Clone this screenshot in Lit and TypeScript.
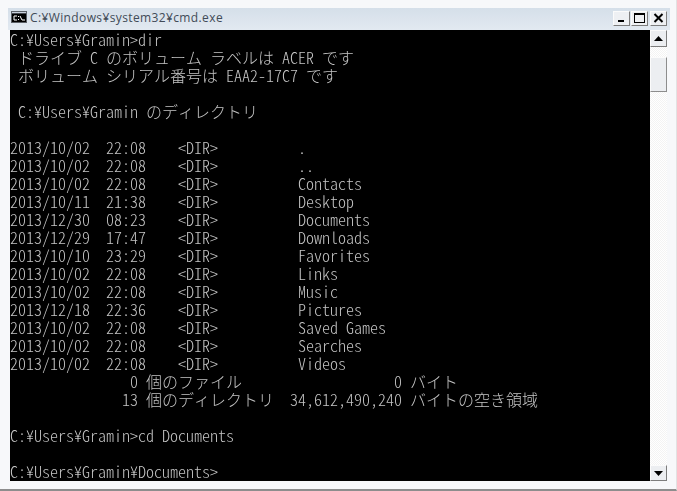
import { LitElement, html, css } from "lit";
import { customElement } from "lit/decorators.js";

const P = "C:¥Users¥Gramin";
const row = (d: string, t: string, n: string) => `${d}  ${t}    <DIR>          ${n}`;
const LINES = [
  `${P}>dir`,
  " ドライブ C のボリューム ラベルは ACER です",
  " ボリューム シリアル番号は EAA2-17C7 です",
  "",
  ` ${P} のディレクトリ`,
  "",
  row("2013/10/02", "22:08", "."),
  row("2013/10/02", "22:08", ".."),
  row("2013/10/02", "22:08", "Contacts"),
  row("2013/10/11", "21:38", "Desktop"),
  row("2013/12/30", "08:23", "Documents"),
  row("2013/12/29", "17:47", "Downloads"),
  row("2013/10/10", "23:29", "Favorites"),
  row("2013/10/02", "22:08", "Links"),
  row("2013/10/02", "22:08", "Music"),
  row("2013/12/18", "22:36", "Pictures"),
  row("2013/10/02", "22:08", "Saved Games"),
  row("2013/10/02", "22:08", "Searches"),
  row("2013/10/02", "22:08", "Videos"),
  "               0 個のファイル                   0 バイト",
  "              13 個のディレクトリ  34,612,490,240 バイトの空き領域",
  "",
  `${P}>cd Documents`,
  "",
  `${P}¥Documents>`,
];

@customElement("app-root")
export class AppRoot extends LitElement {
  static styles = css`
    :host { display: block; width: 677px; height: 491px; overflow: hidden; }
    .win {
      box-sizing: border-box; width: 677px; height: 491px; display: flex; flex-direction: column;
      background: #f7f8fa;
      padding-top: 8px;
      border-bottom: 2px solid #8d8d8d;
      border-right: 1px solid #e2e2e2;
    }
    .title {
      box-sizing: border-box; height: 22px; margin: 0 6px 0 8px; padding: 0 3px 4px 3px;
      display: flex; align-items: center; gap: 3px; flex: none;
      background: linear-gradient(#d5dfe9, #e2e9f1);
    }
    .icon { width: 16px; height: 12px; flex: none; display: block; }
    .caption {
      font: 12px "Open Sans", "Noto Sans", sans-serif; color: #414b57; flex: 1; white-space: pre;
      letter-spacing: 0.38px;
    }
    .btns { display: flex; gap: 1px; margin-top: 2px; }
    .btn {
      box-sizing: border-box; width: 17px; height: 15px; background: #eef0f3;
      border: 1px solid; border-color: #fbfbfb #7d7d7d #7d7d7d #fbfbfb;
      display: flex; align-items: center; justify-content: center;
    }
    .btn svg { display: block; }
    .close { margin-left: 1px; }
    .body { flex: 1; display: flex; padding: 0 0 0 10px; min-height: 0; }
    .term { width: 640px; height: 451px; background: #000; flex: none; overflow: hidden; }
    .text {
      will-change: transform;
      color: #c4c4c4;
      font: 300 16px/18px "Noto Sans CJK JP", sans-serif;
      font-feature-settings: "hwid" 1, "palt" 0, "kern" 0;
      font-kerning: none;
    }
    .line { height: 18px; white-space: pre; line-height: 18px; }
    .bar {
      width: 17px; height: 451px; flex: none; display: flex; flex-direction: column;
      background-color: #f3f3f3;
      background-image: linear-gradient(45deg, #fff 25%, transparent 25%, transparent 75%, #fff 75%),
        linear-gradient(45deg, #fff 25%, transparent 25%, transparent 75%, #fff 75%);
      background-size: 2px 2px; background-position: 0 0, 1px 1px;
    }
    .sb {
      box-sizing: border-box; width: 17px; height: 17px; flex: none; background: #eceef1;
      border: 1px solid; border-color: #fbfbfb #7d7d7d #7d7d7d #fbfbfb;
      display: flex; align-items: center; justify-content: center;
    }
    .down { height: 16px; margin-bottom: 0; }
    .thumb {
      box-sizing: border-box; width: 17px; height: 35px; flex: none; margin-top: 10px; background: #eceef1;
      border: 1px solid; border-color: #fbfbfb #8d8d8d #8d8d8d #fbfbfb;
    }
    .spacer { flex: 1; }
  `;

  render() {
    return html`
      <div class="win">
        <div class="title">
          <svg class="icon" viewBox="0 0 16 12">
            <rect width="16" height="12" fill="#5a5f66"></rect>
            <rect x="1" y="1" width="14" height="1.5" fill="#c8d0dc"></rect>
            <rect x="1" y="2.5" width="14" height="8.5" fill="#000"></rect>
            <path d="M6 5H3v4h3M7.5 5v1M7.5 8v1M9 5l2 4M11 9h3" stroke="#fff" stroke-width="1" fill="none"></path>
          </svg>
          <span class="caption">C:¥Windows¥system32¥cmd.exe</span>
          <div class="btns">
            <div class="btn">
              <svg width="11" height="10" viewBox="0 0 11 10"><rect x="2" y="7" width="6" height="2" fill="#000"></rect></svg>
            </div>
            <div class="btn">
              <svg width="11" height="10" viewBox="0 0 11 10"><rect x="0.5" y="0.5" width="10" height="9" fill="none" stroke="#000"></rect><rect x="0.5" y="0.5" width="10" height="1.5" fill="#000"></rect></svg>
            </div>
            <div class="btn close">
              <svg width="11" height="10" viewBox="0 0 11 10"><path d="M1.5 1l8 8M9.5 1l-8 8" stroke="#000" stroke-width="2"></path></svg>
            </div>
          </div>
        </div>
        <div class="body">
          <div class="term">
            <div class="text">
              ${LINES.map((l) => html`<div class="line">${l}</div>`)}
            </div>
          </div>
          <div class="bar">
            <div class="sb"><svg width="9" height="5" viewBox="0 0 9 5"><path d="M4.5 0L9 5H0z" fill="#000"></path></svg></div>
            <div class="thumb"></div>
            <div class="spacer"></div>
            <div class="sb down"><svg width="9" height="5" viewBox="0 0 9 5"><path d="M0 0h9L4.5 5z" fill="#000"></path></svg></div>
          </div>
        </div>
      </div>
    `;
  }
}
